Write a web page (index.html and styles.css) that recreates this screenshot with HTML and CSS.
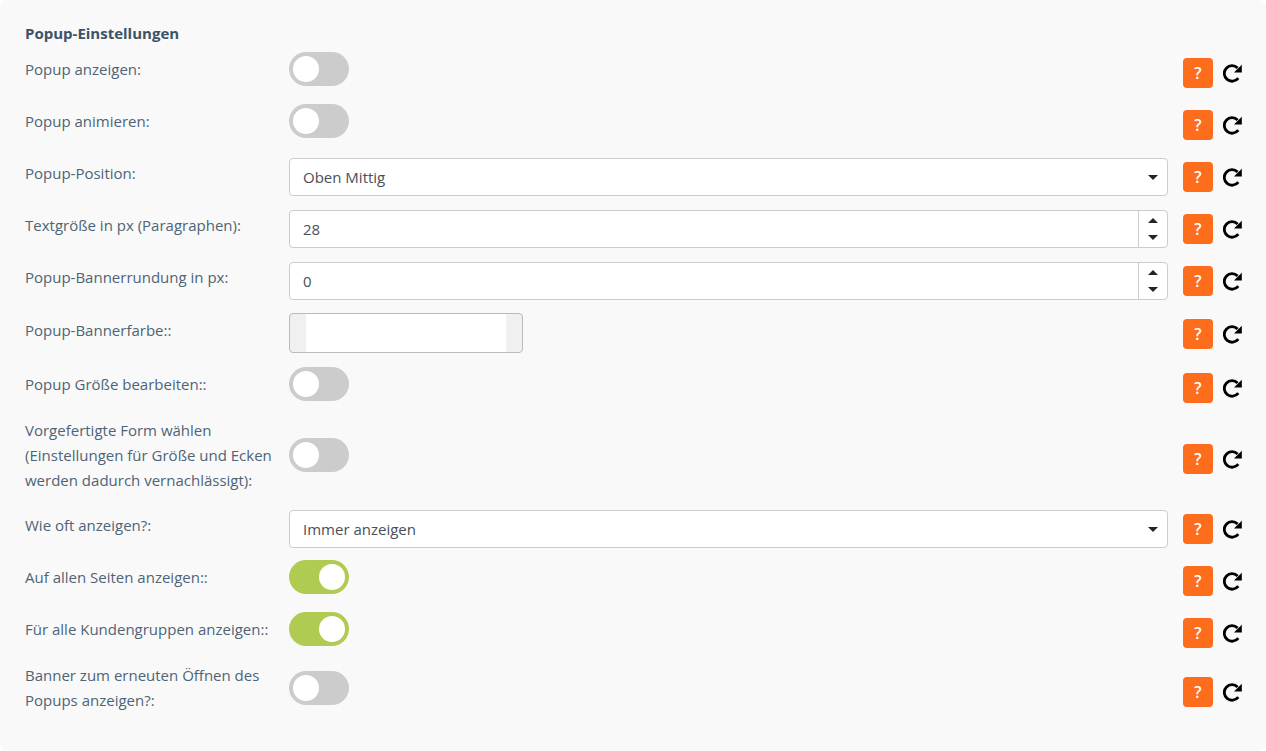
FILE: index.html
```html
<!DOCTYPE html>
<html lang="de">
<head>
    <meta charset="UTF-8">
    <title>Popup-Einstellungen</title>
    <link rel="stylesheet" href="styles.css">
</head>
<body>
    <svg class="icon-sprite" aria-hidden="true">
        <symbol id="redo" viewBox="0 0 19 19">
            <path d="M15.3 14.2A7.8 7.8 0 1 1 14.6 3.9" fill="none" stroke="#000" stroke-width="2.8"/>
            <path d="M18.8 0.8V8.6H11Z"/>
        </symbol>
    </svg>

    <div class="settings-card">
        <h4 class="settings-title">Popup-Einstellungen</h4>

        <div class="form-row">
            <label class="form-label">Popup anzeigen:</label>
            <div class="form-control-wrap"><span class="toggle"><span class="toggle-knob"></span></span></div>
            <div class="form-actions"><button class="help-btn" type="button">?</button><svg class="reset-icon"><use href="#redo"/></svg></div>
        </div>

        <div class="form-row">
            <label class="form-label">Popup animieren:</label>
            <div class="form-control-wrap"><span class="toggle"><span class="toggle-knob"></span></span></div>
            <div class="form-actions"><button class="help-btn" type="button">?</button><svg class="reset-icon"><use href="#redo"/></svg></div>
        </div>

        <div class="form-row">
            <label class="form-label">Popup-Position:</label>
            <div class="form-control-wrap">
                <div class="select-box">
                    <select class="select-input"><option>Oben Mittig</option></select>
                    <span class="select-caret"></span>
                </div>
            </div>
            <div class="form-actions"><button class="help-btn" type="button">?</button><svg class="reset-icon"><use href="#redo"/></svg></div>
        </div>

        <div class="form-row">
            <label class="form-label">Textgröße in px (Paragraphen):</label>
            <div class="form-control-wrap">
                <div class="number-box">
                    <input class="number-input" type="text" value="28">
                    <div class="number-spin"><span class="spin-up"></span><span class="spin-down"></span></div>
                </div>
            </div>
            <div class="form-actions"><button class="help-btn" type="button">?</button><svg class="reset-icon"><use href="#redo"/></svg></div>
        </div>

        <div class="form-row">
            <label class="form-label">Popup-Bannerrundung in px:</label>
            <div class="form-control-wrap">
                <div class="number-box">
                    <input class="number-input" type="text" value="0">
                    <div class="number-spin"><span class="spin-up"></span><span class="spin-down"></span></div>
                </div>
            </div>
            <div class="form-actions"><button class="help-btn" type="button">?</button><svg class="reset-icon"><use href="#redo"/></svg></div>
        </div>

        <div class="form-row form-row-color">
            <label class="form-label">Popup-Bannerfarbe::</label>
            <div class="form-control-wrap"><div class="color-box"><div class="color-value"></div></div></div>
            <div class="form-actions"><button class="help-btn" type="button">?</button><svg class="reset-icon"><use href="#redo"/></svg></div>
        </div>

        <div class="form-row">
            <label class="form-label">Popup Größe bearbeiten::</label>
            <div class="form-control-wrap"><span class="toggle"><span class="toggle-knob"></span></span></div>
            <div class="form-actions"><button class="help-btn" type="button">?</button><svg class="reset-icon"><use href="#redo"/></svg></div>
        </div>

        <div class="form-row form-row-tall">
            <label class="form-label">Vorgefertigte Form wählen (Einstellungen für Größe und Ecken werden dadurch vernachlässigt):</label>
            <div class="form-control-wrap"><span class="toggle"><span class="toggle-knob"></span></span></div>
            <div class="form-actions"><button class="help-btn" type="button">?</button><svg class="reset-icon"><use href="#redo"/></svg></div>
        </div>

        <div class="form-row">
            <label class="form-label">Wie oft anzeigen?:</label>
            <div class="form-control-wrap">
                <div class="select-box">
                    <select class="select-input"><option>Immer anzeigen</option></select>
                    <span class="select-caret"></span>
                </div>
            </div>
            <div class="form-actions"><button class="help-btn" type="button">?</button><svg class="reset-icon"><use href="#redo"/></svg></div>
        </div>

        <div class="form-row">
            <label class="form-label">Auf allen Seiten anzeigen::</label>
            <div class="form-control-wrap"><span class="toggle toggle-on"><span class="toggle-knob"></span></span></div>
            <div class="form-actions"><button class="help-btn" type="button">?</button><svg class="reset-icon"><use href="#redo"/></svg></div>
        </div>

        <div class="form-row">
            <label class="form-label">Für alle Kundengruppen anzeigen::</label>
            <div class="form-control-wrap"><span class="toggle toggle-on"><span class="toggle-knob"></span></span></div>
            <div class="form-actions"><button class="help-btn" type="button">?</button><svg class="reset-icon"><use href="#redo"/></svg></div>
        </div>

        <div class="form-row form-row-double">
            <label class="form-label">Banner zum erneuten Öffnen des Popups anzeigen?:</label>
            <div class="form-control-wrap"><span class="toggle"><span class="toggle-knob"></span></span></div>
            <div class="form-actions"><button class="help-btn" type="button">?</button><svg class="reset-icon"><use href="#redo"/></svg></div>
        </div>
    </div>
</body>
</html>
```

FILE: styles.css
```css
html, body {
    height: 100%;
}
body {
    margin: 0;
    background-color: #fff;
    font-family: 'Open Sans', sans-serif;
    font-size: 15px;
    color: #4e6476;
    overflow: hidden;
}
.icon-sprite {
    display: none;
}
.settings-card {
    box-sizing: border-box;
    height: 751px;
    padding: 24px 0 0 25px;
    background-color: #f9f9f9;
    border-radius: 8px;
}
.settings-title {
    margin: 0 0 9px;
    font-size: 15px;
    font-weight: 700;
    line-height: 19px;
    color: #3c5366;
}
.form-row {
    display: grid;
    grid-template-columns: 264px 879px auto;
    align-items: center;
    margin-bottom: 10px;
}
.form-row-color {
    margin-bottom: 11px;
}
.form-row-tall {
    grid-template-rows: 80px;
    margin-bottom: 9px;
}
.form-row-double {
    grid-template-rows: 56px;
}
.form-label {
    padding: 0 8px 8px 0;
    line-height: 25px;
}
.form-control-wrap {
    box-sizing: border-box;
    height: 42px;
}
.form-actions {
    display: flex;
    align-items: center;
    gap: 10px;
    padding-left: 15px;
}
.help-btn {
    width: 30px;
    height: 30px;
    padding: 0;
    border: none;
    border-radius: 4px;
    background-color: #fd6d1c;
    color: #fff;
    font-family: inherit;
    font-size: 16px;
    font-weight: 600;
}
.reset-icon {
    width: 19px;
    height: 19px;
    fill: #000;
}

/* toggles */
.toggle {
    position: relative;
    display: block;
    width: 60px;
    height: 34px;
    border-radius: 34px;
    background-color: #ccc;
}
.toggle-knob {
    position: absolute;
    top: 4px;
    left: 4px;
    width: 26px;
    height: 26px;
    border-radius: 50%;
    background-color: #fff;
}
.toggle-on {
    background-color: #b0cb52;
}
.toggle-on .toggle-knob {
    left: 30px;
}

/* select */
.select-box {
    position: relative;
    margin-top: 2px;
}
.select-input {
    display: block;
    box-sizing: border-box;
    width: 100%;
    height: 38px;
    padding: 0 13px;
    border: 1px solid #ccc;
    border-radius: 4px;
    background-color: #fff;
    font-family: inherit;
    font-size: 15px;
    color: #495057;
    appearance: none;
}
.select-caret {
    position: absolute;
    top: 17px;
    right: 10px;
    border-top: 5px solid #212529;
    border-left: 5px solid transparent;
    border-right: 5px solid transparent;
}

/* number input */
.number-box {
    display: flex;
    box-sizing: border-box;
    height: 38px;
    margin-top: 2px;
    border: 1px solid #ccc;
    border-radius: 4px;
    background-color: #fff;
}
.number-input {
    flex: 1;
    min-width: 0;
    padding: 0 13px;
    border: none;
    background: none;
    font-family: inherit;
    font-size: 15px;
    color: #495057;
}
.number-spin {
    display: flex;
    flex-direction: column;
    align-items: center;
    justify-content: space-between;
    box-sizing: border-box;
    width: 29px;
    padding: 7px 0;
    border-left: 1px solid #ccc;
}
.spin-up {
    border-bottom: 5px solid #212529;
    border-left: 5px solid transparent;
    border-right: 5px solid transparent;
}
.spin-down {
    border-top: 5px solid #212529;
    border-left: 5px solid transparent;
    border-right: 5px solid transparent;
}

/* colour picker */
.color-box {
    box-sizing: border-box;
    width: 234px;
    height: 40px;
    margin-top: 1px;
    padding: 0 16px;
    border: 1px solid #bbb;
    border-radius: 4px;
    background-color: #f0f0f0;
}
.color-value {
    height: 100%;
    background-color: #fff;
}
.form-row-color .form-control-wrap {
    height: 44px;
}
```
